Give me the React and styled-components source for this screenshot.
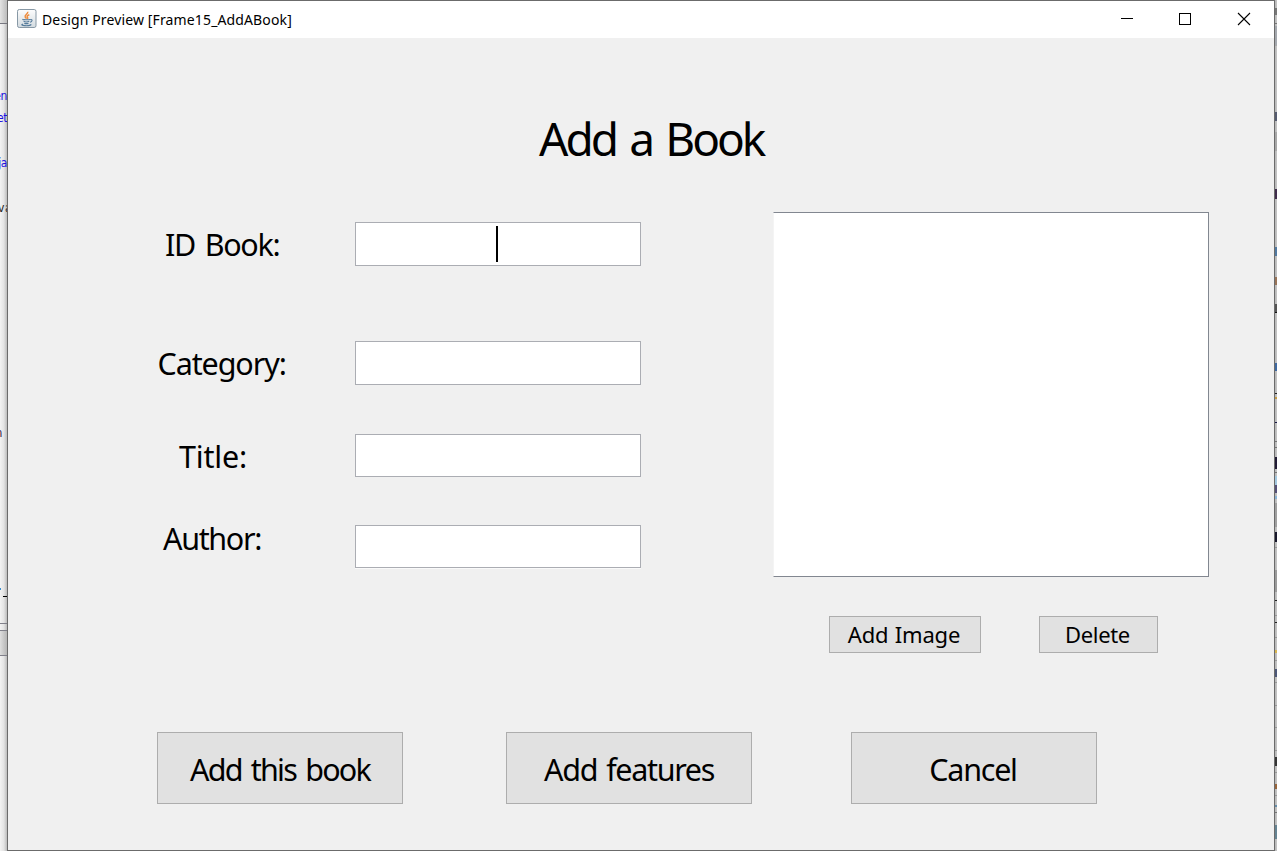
import React from "react";
import styled, { createGlobalStyle } from "styled-components";

const GlobalStyle = createGlobalStyle`
  * { box-sizing: border-box; }
  body { margin: 0; overflow: hidden; background: #c4c4c4; }
`;

const Desktop = styled.div`
  display: flex;
  width: 1277px;
  height: 851px;
  overflow: hidden;
  font-family: "Noto Sans", sans-serif;
  color: #000;
`;

const Strip = styled.div`
  display: flex;
  flex-direction: column;
  flex: none;
  width: ${(p) => p.$w}px;
  height: 851px;
  overflow: hidden;
  background: ${(p) => p.$bg};
`;

const Slice = styled.div`
  flex: none;
  display: flex;
  justify-content: ${(p) => p.$align || "flex-end"};
  align-items: center;
  height: ${(p) => p.$h}px;
  overflow: hidden;
  background: ${(p) => p.$bg || "transparent"};
  color: ${(p) => p.$color || "#000"};
  font: 12px/1 "DejaVu Sans Condensed", "DejaVu Sans", sans-serif;
  letter-spacing: ${(p) => (p.$align ? 0.6 : -0.4)}px;
  white-space: nowrap;
`;

const Window = styled.main`
  display: flex;
  flex-direction: column;
  flex: none;
  width: 1268px;
  height: 851px;
  border: 1px solid #6b6b6b;
  background: #f0f0f0;
`;

const TitleBar = styled.header`
  display: flex;
  align-items: center;
  flex: none;
  height: 37px;
  padding: 0 0 1px 9px;
  background: #fff;
`;

const Caption = styled.span`
  flex: 1;
  margin-left: 5px;
  padding-top: 2px;
  font-size: 14px;
  line-height: 20px;
  letter-spacing: ${(p) => p.$ls}px;
  white-space: nowrap;
`;

const Controls = styled.div`
  display: flex;
  height: 36px;
  svg { display: block; }
`;

const Content = styled.div`
  display: flex;
  flex-direction: column;
  flex: 1;
`;

const Heading = styled.h1`
  flex: none;
  height: 174px;
  margin: 0;
  padding: 69px 0 0 531px;
  font-size: 46px;
  font-weight: 400;
  line-height: 63px;
  letter-spacing: ${(p) => p.$ls}px;
  word-spacing: 4.3px;
  white-space: nowrap;
`;

const Columns = styled.div`
  display: flex;
  flex: none;
  height: 520px;
`;

const Form = styled.div`
  width: 765px;
  padding-top: 10px;
`;

const Row = styled.div`
  display: flex;
  height: ${(p) => p.$h}px;
  margin-bottom: ${(p) => p.$gap}px;
`;

const Label = styled.label`
  flex: none;
  width: 347px;
  margin-top: ${(p) => p.$top}px;
  padding-left: ${(p) => p.$left}px;
  font-size: 30.5px;
  line-height: 42px;
  letter-spacing: ${(p) => p.$ls}px;
  word-spacing: 3px;
  white-space: nowrap;
`;

const Field = styled.div`
  display: flex;
  justify-content: center;
  align-items: center;
  width: 286px;
  height: 100%;
  padding-right: 2px;
  border: 1px solid #abadb3;
  background: #fff;
  box-shadow: ${(p) => (p.$edge ? "0 1px 0 #fafafa" : "none")};
`;

const Caret = styled.span`
  width: 2px;
  height: 36px;
  background: #000;
`;

const ImageSide = styled.div`
  width: 436px;
`;

const Picture = styled.div`
  height: 365px;
  border: 1px solid #828790;
  border-left-color: #f4f4f4;
  background: #fff;
`;

const Actions = styled.div`
  display: flex;
  gap: ${(p) => p.$gap}px;
  padding: ${(p) => p.$pad};
`;

const Button = styled.button`
  flex: none;
  display: flex;
  justify-content: center;
  align-items: center;
  width: ${(p) => p.$w}px;
  height: ${(p) => p.$h}px;
  margin: 0;
  padding: ${(p) => p.$pt || 0}px ${(p) => p.$pr || 0}px 0 0;
  border: 1px solid #adadad;
  border-radius: 0;
  background: #e1e1e1;
  color: #000;
  font-family: inherit;
  font-size: ${(p) => p.$size}px;
  line-height: 1.36;
  letter-spacing: ${(p) => p.$ls}px;
  word-spacing: ${(p) => p.$ws || 1}px;
  white-space: nowrap;
`;

const JavaIcon = () => (
  <svg width="20" height="20" viewBox="0 0 20 20">
    <defs>
      <linearGradient id="tile" x1="0" y1="0" x2="0" y2="1">
        <stop offset="0" stopColor="#fdfdfd" />
        <stop offset="1" stopColor="#d3dbe0" />
      </linearGradient>
    </defs>
    <rect x="0.5" y="0.5" width="18.5" height="18" rx="1.8" fill="url(#tile)" stroke="#8798a5" />
    <path d="M10.7 2.8c.8 2-3.4 3-2.5 5.1.3.8 1 1.2 1.1 1.8M12.3 5.7c-2 .7-2.7 1.7-1.8 2.7.5.6.1 1.1-.3 1.4" fill="none" stroke="#ee8c3e" strokeWidth="1.5" />
    <path d="M5.8 10.2c-.8.7 6.5.9 7.3.1M6.6 12.3c1.2.7 4.2.7 5.7 0M7.3 14.2c1.1.5 3 .5 4.2 0M13.2 10.7c2.7-.8 2.3 2-.2 2.5M5.9 14.9c-4.7 1.8 6.9 2.6 8.4.5" fill="none" stroke="#557b9b" strokeWidth="1.1" />
  </svg>
);

const leftEdge = [
  { h: 23, bg: "linear-gradient(90deg,#e3e3e3,#bcbcbc)" },
  { h: 1, bg: "#777780" },
  { h: 65 },
  { h: 14, text: "en", color: "#1a12e0" },
  { h: 8 },
  { h: 14, text: "et", color: "#1a12e0" },
  { h: 31 },
  { h: 14, text: "ja", color: "#1a12e0" },
  { h: 31 },
  { h: 14, text: "va", color: "#222", align: "flex-start", inset: -2 },
  { h: 211 },
  { h: 14, text: "n", color: "#301040", inset: 5 },
  { h: 148 },
  { h: 2, bg: "linear-gradient(90deg,#3c8fd0 1px,transparent 1px)" },
  { h: 6 },
  { h: 1, bg: "linear-gradient(90deg,transparent 3px,#000 3px)" },
  { h: 26 },
  { h: 1, bg: "#80808a" },
  { h: 6 },
  { h: 1, bg: "#80808a" },
  { h: 24, bg: "linear-gradient(90deg,#dedede,#b5b5b5)" },
  { h: 1, bg: "#80808a" },
];

// Each entry is [top, height, colour] of a mark showing beside the window.
const rightMarks = [
  [8, 7, "#777"], [23, 1, "#777"], [26, 19, "#a4a8ae"], [45, 1, "#aaa"],
  [112, 9, "#555b70"], [132, 19, "#a8a8a8"],
  [189, 10, "#402d4c"], [247, 9, "#5279a0"], [277, 8, "#987459"],
  [304, 8, "#555"], [312, 1, "#111"], [363, 8, "#3f69a1"], [393, 1, "#222"],
  [397, 2, "#c69c45"], [422, 1, "#181848"], [441, 1, "#777"], [447, 1, "#777"],
  [457, 12, "#211b35"], [472, 1, "#777"], [476, 9, "#a4c8df"], [485, 8, "#555078"],
  [496, 3, "#8bb4d6"], [503, 24, "#a0a0a0"], [532, 10, "#17172b"],
  [547, 1, "#999"], [570, 22, "#9b9b9b"], [600, 1, "#222"], [615, 1, "#999"],
  [622, 1, "#222"], [637, 1, "#999"], [650, 3, "#d7b550"], [660, 1, "#999"],
  [669, 8, "#4d5878"], [682, 1, "#999"], [705, 1, "#999"], [727, 1, "#999"],
  [750, 1, "#999"], [757, 9, "#353535"], [772, 1, "#999"], [784, 5, "#98653c"],
  [795, 1, "#999"], [805, 2, "#658da9"], [812, 1, "#777"], [825, 14, "#668493"],
];

const rightEdge = rightMarks.reduce(
  (acc, [top, h, bg]) => {
    acc.list.push({ h: top - acc.end }, { h, bg });
    acc.end = top + h;
    return acc;
  },
  { list: [], end: 0 }
).list;

const fields = [
  { label: "ID Book:", h: 44, gap: 75, left: 157, top: 1, ls: -1.3, caret: true },
  { label: "Category:", h: 44, gap: 49, left: 149.5, top: 1, ls: -1.1 },
  { label: "Title:", h: 43, gap: 48, left: 171, top: 1, ls: -0.2 },
  { label: "Author:", h: 43, gap: 0, left: 155, top: -8, ls: -1.35, edge: true },
];

export default function App() {
  return (
    <Desktop>
      <GlobalStyle />
      <Strip $w={7} $bg="linear-gradient(90deg,#f3f3f3,#e4e4e4 55%,#bcbcbc)">
        {leftEdge.map((s, i) => (
          <Slice key={i} $h={s.h} $bg={s.bg} $color={s.color} $align={s.align}>
            {s.text && (
              <span style={{ marginRight: s.inset > 0 ? s.inset : 0, marginLeft: s.inset < 0 ? s.inset : 0 }}>
                {s.text}
              </span>
            )}
          </Slice>
        ))}
      </Strip>
      <Window>
        <TitleBar>
          <JavaIcon />
          <Caption $ls={0.13}>Design Preview [Frame15_AddABook]</Caption>
          <Controls>
            <svg width="165" height="36" viewBox="1109 1 165 36" fill="none" stroke="#000" shapeRendering="crispEdges">
              <path d="M1121 18.5h12" />
              <rect x="1179.5" y="13.5" width="11" height="11" />
              <path d="M1238 13l12 12M1250 13l-12 12" shapeRendering="auto" strokeWidth="1.1" />
            </svg>
          </Controls>
        </TitleBar>
        <Content>
          <Heading $ls={-3}>Add a Book</Heading>
          <Columns>
            <Form>
              {fields.map((f) => (
                <Row key={f.label} $h={f.h} $gap={f.gap}>
                  <Label $left={f.left} $top={f.top} $ls={f.ls}>{f.label}</Label>
                  <Field $edge={f.edge}>{f.caret && <Caret />}</Field>
                </Row>
              ))}
            </Form>
            <ImageSide>
              <Picture />
              <Actions $gap={58} $pad="39px 0 0 56px">
                <Button $w={152} $h={37} $size={22} $ls={-0.2} $pt={1} $pr={2}>Add Image</Button>
                <Button $w={119} $h={37} $size={22} $ls={-0.35} $pt={1} $pr={2}>Delete</Button>
              </Actions>
            </ImageSide>
          </Columns>
          <Actions $gap={0} $pad="0 0 0 149px">
            <Button $w={246} $h={72} $size={30.5} $ls={-1.75} $ws={2.9} $pt={3}>Add this book</Button>
            <Actions $gap={99} $pad="0 0 0 103px">
              <Button $w={246} $h={72} $size={30.5} $ls={-1.35} $ws={2.6} $pt={3}>Add features</Button>
              <Button $w={246} $h={72} $size={30.5} $ls={-1.25} $pt={3} $pr={2}>Cancel</Button>
            </Actions>
          </Actions>
        </Content>
      </Window>
      <Strip $w={2} $bg="linear-gradient(90deg,#b7b7b7,#c6c6c6)">
        {rightEdge.map((s, i) => (
          <Slice key={i} $h={s.h} $bg={s.bg} />
        ))}
      </Strip>
    </Desktop>
  );
}
